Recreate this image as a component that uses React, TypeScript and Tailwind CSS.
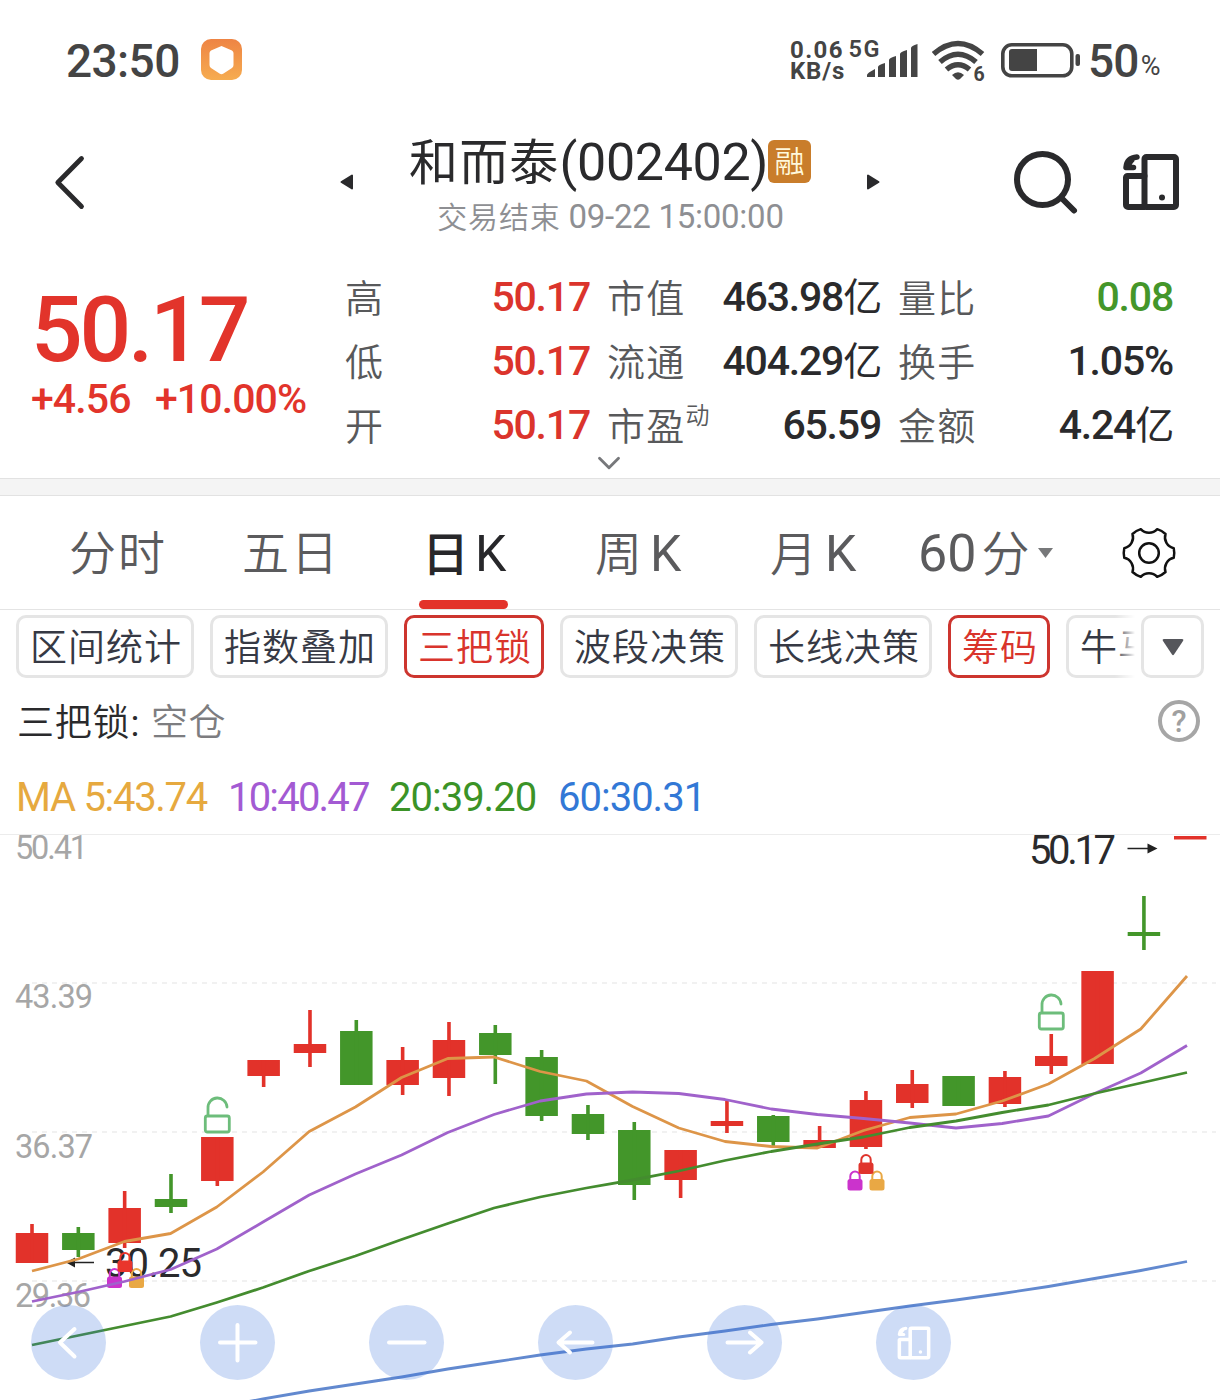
import { ChevronDown } from 'lucide-react';
import clsx from 'clsx';

type Side = 'up' | 'down';

// high, body top, body bottom, low (chart y coordinates)
const CANDLES: [Side, number, number, number, number][] = [
  ['up', 1224, 1233, 1263, 1263],
  ['down', 1227, 1233, 1250, 1257],
  ['up', 1191, 1208, 1243, 1248],
  ['down', 1174, 1199, 1207, 1213],
  ['up', 1137, 1137, 1181, 1186],
  ['up', 1060, 1060, 1076, 1087],
  ['up', 1010, 1044, 1053, 1067],
  ['down', 1020, 1031, 1085, 1085],
  ['up', 1047, 1060, 1085, 1095],
  ['up', 1022, 1040, 1078, 1096],
  ['down', 1025, 1033, 1055, 1084],
  ['down', 1050, 1057, 1116, 1121],
  ['down', 1105, 1114, 1134, 1140],
  ['down', 1122, 1130, 1185, 1200],
  ['up', 1150, 1150, 1180, 1198],
  ['up', 1100, 1121, 1126, 1133],
  ['down', 1115, 1116, 1142, 1148],
  ['up', 1126, 1140, 1148, 1148],
  ['up', 1091, 1100, 1147, 1149],
  ['up', 1070, 1084, 1103, 1108],
  ['down', 1076, 1076, 1106, 1106],
  ['up', 1071, 1077, 1104, 1107],
  ['up', 1034, 1056, 1066, 1074],
  ['up', 971, 971, 1064, 1064],
  ['down', 896, 932, 936, 950],
  ['up', 836, 836, 839.5, 839],
];

const LINES = [
  { color: '#6289cf', start: 4, ys: [1407, 1399, 1391, 1384, 1377, 1369, 1362, 1355, 1349, 1344, 1337, 1331, 1324.5, 1319, 1312.5, 1306, 1300, 1293.5, 1286.5, 1278.5, 1270.5, 1261.5] },
  { color: '#dd9548', start: 0, ys: [1271, 1259, 1241.5, 1233.5, 1207, 1172, 1131.5, 1107, 1077.5, 1058.5, 1057, 1071.5, 1081, 1106.5, 1128, 1141.5, 1146.5, 1148, 1130.5, 1117.5, 1114, 1101, 1084, 1058.5, 1029, 976] },
  { color: '#a062cb', start: 0, ys: [1301.5, 1292, 1281.5, 1269.5, 1249, 1222, 1195, 1174, 1155, 1132.5, 1114.5, 1101, 1094, 1092, 1093.5, 1099.5, 1109, 1114.5, 1118.5, 1123, 1128, 1123.5, 1116, 1093.5, 1073, 1045.5] },
  { color: '#448c2f', start: 0, ys: [1345, 1335.5, 1326, 1316.5, 1302.5, 1287.5, 1271, 1256, 1239.5, 1223.5, 1208, 1197, 1188, 1180, 1171, 1160.5, 1151.5, 1144, 1137, 1127.5, 1121, 1112.5, 1105, 1093.5, 1083, 1072.5] },
];

const QUOTES = [
  [{ label: '高', value: '50.17', tone: 'text-[#db342c]' }, { label: '市值', value: '463.98', unit: '亿' }, { label: '量比', value: '0.08', tone: 'text-[#44962a]' }],
  [{ label: '低', value: '50.17', tone: 'text-[#db342c]' }, { label: '流通', value: '404.29', unit: '亿' }, { label: '换手', value: '1.05%' }],
  [{ label: '开', value: '50.17', tone: 'text-[#db342c]' }, { label: '市盈', sup: '动', value: '65.59' }, { label: '金额', value: '4.24', unit: '亿' }],
] as { label: string; value: string; unit?: string; sup?: string; tone?: string }[][];

const CHIPS = [
  { label: '区间统计' },
  { label: '指数叠加' },
  { label: '三把锁', active: true },
  { label: '波段决策' },
  { label: '长线决策' },
  { label: '筹码', active: true },
  { label: '牛马熊' },
];

function RotateIcon({ className }: { className: string }) {
  return (
    <svg className={className} viewBox="0 0 58 58" fill="none" stroke="currentColor" strokeWidth="6" strokeLinejoin="round" strokeLinecap="round">
      <rect x="22.5" y="4" width="31.5" height="50" rx="2" />
      <path d="M22.5 23H5.5a1.5 1.5 0 0 0-1.5 1.5V52a2 2 0 0 0 2 2H22.5" />
      <path d="M15 4C8 4.500 4.500 8.500 4 14.500H11.500" strokeWidth="5.5" />
      <path d="M5 14.500C8 13 8 9 10.500 7.500" strokeWidth="4" />
      <circle cx="40" cy="44.500" r="3" fill="currentColor" stroke="none" />
    </svg>
  );
}

function GearIcon() {
  const at = (r: number, deg: number) => {
    const a = (deg * Math.PI) / 180;
    return `${(28 + r * Math.cos(a)).toFixed(2)} ${(28 + r * Math.sin(a)).toFixed(2)}`;
  };
  // six soft teeth joined by concave arcs
  let d = `M${at(25.2, -11)}`;
  for (let i = 0; i < 6; i++) {
    const t = i * 60;
    d += `Q${at(25.8, t)} ${at(25.2, t + 11)}A11 11 0 0 0 ${at(25.2, t + 49)}`;
  }
  return (
    <svg className="size-14" viewBox="0 0 56 56" fill="none" stroke="#111" strokeWidth="2.5" strokeLinejoin="round">
      <path d={d + 'Z'} />
      <circle cx="28" cy="28" r="9.8" />
    </svg>
  );
}

function StatusBar() {
  return (
    <div className="flex h-[110px] items-start pt-[37px] pl-[66px] text-[#444]">
      <span className="w-[135px] text-[46px] leading-[49px] font-medium tracking-[-0.6px]">23:50</span>
      <svg className="mt-[2px] size-[41px]" viewBox="0 0 41 41">
        <defs>
          <linearGradient id="shield" x1="0" y1="0" x2="0" y2="1">
            <stop offset="0" stopColor="#ee8444" />
            <stop offset="1" stopColor="#f6ac50" />
          </linearGradient>
        </defs>
        <rect width="41" height="41" rx="10" fill="url(#shield)" />
        <path d="M20.5 7 31 11.500Q32.500 12.500 32.500 14V26Q32.500 28 31 29L22.500 34.500Q20.500 36 18.500 34.500L10 29Q8.500 28 8.500 26V14Q8.500 12.500 10 11.500Z" fill="#fff" />
      </svg>
      <div className="ml-[548px] w-[58px] pt-[3px] text-[24px] leading-[21px] font-bold">
        <div className="tracking-[1.4px]">0.06</div>
        <div className="tracking-[0.8px]">KB/s</div>
      </div>
      <svg className="h-[44px] w-[70px] overflow-visible" viewBox="848 37 70 44" fill="#444">
        <text x="848.5" y="57" fontSize="23.5" fontWeight="600" letterSpacing="1.5">5G</text>
        <path d="M867 77v-2q0-2 8-6v8zM878 77V67q0-2 7-4v14zM889 77V60q0-2 7-4v21zM900 77V54q0-2 7-4v27zM911 77V48q0-2 6.500-4v33z" />
      </svg>
      <svg className="ml-[14px] h-[48px] w-[54px]" viewBox="932 37 54 48" fill="none" stroke="#444" strokeWidth="5.5">
        <path d="M933.500 54Q958 33 982.500 54" />
        <path d="M940 62Q958 46.500 976 62" />
        <path d="M946.500 69.500Q958 60 969.500 69.500" />
        <path d="M952 75Q958 69.500 964 75L960 79Q958 80.500 956 79Z" fill="#444" stroke="none" />
        <text x="973.5" y="81" fontSize="19.5" fontWeight="700" fill="#444" stroke="none">6</text>
      </svg>
      <svg className="ml-[14px] h-[46px] w-[82px]" viewBox="1000 37 82 46">
        <rect x="1002.8" y="44.8" width="69" height="31" rx="9" fill="none" stroke="#444" strokeWidth="3.6" />
        <path d="M1012 49h25v22h-25q-3 0-3-3V52q0-3 3-3z" fill="#444" />
        <rect x="1075.5" y="54" width="4.5" height="12" rx="2" fill="#444" />
      </svg>
      <span className="ml-[6px] text-[46px] leading-[49px] font-medium tracking-[-0.8px]">50</span>
      <span className="ml-[2px] text-[27px] leading-[58px]">%</span>
    </div>
  );
}

function Header() {
  return (
    <div className="flex h-[158px] text-[#2a2a2c]">
      <svg className="mt-[44px] ml-[54px] h-[56px] w-[32px]" viewBox="54 154 32 56" fill="none" stroke="currentColor" strokeWidth="4.8" strokeLinecap="round" strokeLinejoin="round">
        <path d="M81.500 158.500 57.800 182.500 81.500 206.500" />
      </svg>
      <svg className="mt-[64px] ml-[254px] h-4 w-[13px]" viewBox="0 0 13 16" fill="currentColor" stroke="currentColor" strokeWidth="2" strokeLinejoin="round">
        <path d="M12 1.500V14.500L1.500 8Z" />
      </svg>
      <div className="w-[514px] pt-[25px]">
        <div className="flex h-[56px] items-center justify-center">
          <span className="text-[52px] leading-[56px] tracking-[-0.35px]">
            <span className="text-[49px] tracking-[1.2px]">和而泰</span>(002402)
          </span>
          <span className="mt-[-4px] flex size-[43px] items-center justify-center rounded-md bg-[#c97d2b] pt-[2px] text-[30px] leading-none font-[350] text-[#fff8dc]">融</span>
        </div>
        <div className="mt-[6px] pl-px text-center text-[33px] leading-[40px] tracking-[-0.25px] text-[#8e8f93]">
          <span className="text-[30px] font-[350] tracking-[0.8px]">交易结束</span> 09-22 15:00:00
        </div>
      </div>
      <svg className="mt-[64px] h-4 w-[13px]" viewBox="0 0 13 16" fill="currentColor" stroke="currentColor" strokeWidth="2" strokeLinejoin="round">
        <path d="M1 1.500V14.500L11.500 8Z" />
      </svg>
      <svg className="mt-[40px] ml-[133px] size-[66px]" viewBox="1013 150 66 66" fill="none" stroke="currentColor" strokeWidth="6" strokeLinecap="round">
        <circle cx="1042.5" cy="179.5" r="25.5" />
        <path d="M1061.500 198 1074 210.500" />
      </svg>
      <RotateIcon className="mt-[43px] ml-[43px] size-[58px]" />
    </div>
  );
}

function Quote() {
  return (
    <div className="relative flex h-[210px]">
      <div className="w-[345px] text-[#e2342b]">
        <div className="mt-[16px] ml-[31px] text-[91px] leading-[92px] font-medium tracking-[-3.2px]">50.17</div>
        <div className="mt-[-2px] ml-[31px] flex text-[41px] leading-[50px] font-medium tracking-[-0.9px]">
          <span className="w-[124px]">+4.56</span>
          <span>+10.00%</span>
        </div>
      </div>
      <div className="flex flex-col">
        {QUOTES.map((row, i) => (
          <div key={i} className="grid h-[64px] grid-cols-[245px_274px_275px] gap-x-[17px]">
            {row.map((q) => (
              <div key={q.label} className="flex justify-between">
                <span className="text-[38px] leading-[62px] font-[350] tracking-[1.2px] text-[#58595b]">
                  {q.label}
                  {q.sup && <sup className="top-[-16px] text-[24px] leading-none">{q.sup}</sup>}
                </span>
                <span className={clsx('text-[41px] leading-[58px] font-medium tracking-[-1.2px]', q.tone ?? 'text-[#2a2a2c]')}>
                  {q.value}
                  {q.unit && <span className="text-[39px] font-normal">{q.unit}</span>}
                </span>
              </div>
            ))}
          </div>
        ))}
      </div>
      <ChevronDown className="absolute top-[176px] left-[590px] size-[38px] text-[#77787b]" strokeWidth={1.8} />
    </div>
  );
}

function Tabs() {
  return (
    <div className="relative flex h-[114px] border-b border-[#e4e4e4] text-[47px] leading-[116px] text-[#5b5b5d]">
      <span className="ml-[69px] w-[173px] font-[350] tracking-[2px]">分时</span>
      <span className="w-[180px] font-[350] tracking-[2px]">五日</span>
      <span className="w-[173px] font-medium text-[#27272a]">日<span className="ml-[6px] text-[50px] font-normal">K</span></span>
      <span className="w-[175px] font-[350]">周<span className="ml-[8px] text-[50px] font-normal">K</span></span>
      <span className="w-[148px] font-[350]">月<span className="ml-[8px] text-[50px] font-normal">K</span></span>
      <span className="w-[120px] whitespace-nowrap">
        <span className="text-[52px]">60</span>
        <span className="ml-[5px] text-[48px] font-[350]">分</span>
      </span>
      <svg className="mt-[52px] h-[10px] w-[15px]" viewBox="0 0 15 10" fill="#77787a">
        <path d="M0 0H15L7.500 10Z" />
      </svg>
      <span className="mt-[29px] ml-[68px]">
        <GearIcon />
      </span>
      <div className="absolute bottom-0 left-[419px] h-[9px] w-[89px] rounded-full bg-[#e3322a]" />
    </div>
  );
}

function Indicators() {
  return (
    <div className="relative mt-[5px] flex h-[63px] gap-4 overflow-hidden pl-4">
      {CHIPS.map((c) => (
        <span
          key={c.label}
          className={clsx(
            'h-[63px] shrink-0 rounded-[10px] border-3 pr-[9px] pl-[11px] text-[37px] leading-[61px] font-[350] tracking-[1px]',
            c.active ? 'border-[#cd352f] text-[#d9342c]' : 'border-[#e5e5e5] text-[#363944]'
          )}
        >
          {c.label}
        </span>
      ))}
      {/* fade the overflowing chip behind the menu button */}
      <div className="absolute top-0 right-0 flex h-full bg-white pr-4">
        <div className="absolute right-full h-full w-5 bg-linear-to-r from-white/0 to-white" />
        <div className="ml-[6px] flex h-full w-[63px] items-center justify-center rounded-[10px] border-3 border-[#e5e5e5]">
          <svg className="h-[18px] w-[22px]" viewBox="0 0 22 18" fill="#55565b">
            <path d="M2 1H20Q22 1 21 3L12 16.500Q11 18 10 16.500L1 3Q0 1 2 1Z" />
          </svg>
        </div>
      </div>
    </div>
  );
}

function Lock({ x, y, color }: { x: number; y: number; color: string }) {
  return (
    <g transform={`translate(${x} ${y})`}>
      <path d="M2.800 10V5.800a4.700 4.700 0 0 1 9.400 0v4.200" fill="none" stroke={color} strokeWidth="2" />
      <rect y="8.5" width="15" height="11.5" rx="2.5" fill={color} />
    </g>
  );
}

function OpenLock({ x, y }: { x: number; y: number }) {
  return (
    <g transform={`translate(${x} ${y})`} fill="none" stroke="#6dbd7b" strokeWidth="2.8" strokeLinecap="round">
      <rect x="1.3" y="18.5" width="24" height="16" rx="2" />
      <path d="M4 18V10.500a9.500 9.500 0 0 1 19-1" />
    </g>
  );
}

function Chart() {
  return (
    <svg className="block h-[566px] w-[1220px] overflow-visible" viewBox="0 834 1220 566">
      <path d="M0 834.500H1220" stroke="#ececec" />
      {[983, 1132, 1281].map((y) => (
        <path key={y} d={`M32 ${y}H1216`} stroke="#ededed" strokeWidth="1.5" strokeDasharray="5 5" />
      ))}
      <g fontSize="32.5" fill="#a6a6a6">
        <text x="15" y="859" textLength="73">50.41</text>
        <text x="15" y="1008" textLength="78">43.39</text>
        <text x="15" y="1158" textLength="78">36.37</text>
        <text x="15" y="1307" textLength="76">29.36</text>
      </g>
      <g fontSize="40" fill="#2a2a2c">
        <text x="1029" y="864" textLength="87">50.17</text>
        <text x="105" y="1277" textLength="97">30.25</text>
      </g>
      <path d="M1127.500 848.500H1148M74 1262.500H94" stroke="#222" strokeWidth="1.3" />
      <path d="M1147.500 843.500V853.500L1157.500 848.500ZM75 1257.500V1267.500L66 1262.500Z" fill="#222" />
      {CANDLES.map(([side, high, top, bottom, low], i) => {
        const x = 32 + i * 46.33;
        return (
          <g key={i} fill={side === 'up' ? '#e2322a' : '#43962a'}>
            <rect x={x - 16.25} y={top} width="32.5" height={bottom - top} />
            <rect x={x - 1.8} y={high} width="3.6" height={low - high} />
          </g>
        );
      })}
      <Lock x={107} y={1268} color="#cb33cc" />
      <Lock x={129} y={1268} color="#e9a844" />
      <Lock x={117.5} y={1252} color="#e9352c" />
      <Lock x={847.5} y={1170.5} color="#cb33cc" />
      <Lock x={869.5} y={1170.5} color="#e9a844" />
      <Lock x={858.5} y={1154} color="#e0342c" />
      <OpenLock x={204} y={1097.5} />
      <OpenLock x={1038} y={994.5} />
      {LINES.map((l) => (
        <polyline
          key={l.color}
          points={l.ys.map((y, i) => `${32 + (i + l.start) * 46.2},${y}`).join(' ')}
          fill="none"
          stroke={l.color}
          strokeWidth="2.8"
          strokeLinejoin="round"
        />
      ))}
    </svg>
  );
}

const TOOLS = [
  'M43.5 24 29 37.5 43.5 51.5',
  'M20 37.5H55.5M37.5 20V55.5',
  'M20 37.5H55.5',
  'M20.5 37.5H54.5M32 27.5 20.5 37.5 32 47.5',
  'M20.5 37.5H54.5M43 27.5 54.5 37.5 43 47.5',
];

export default function App() {
  return (
    <div className="h-[1400px] w-[1220px] overflow-hidden bg-white font-[Roboto,'Noto_Sans_CJK_SC',sans-serif]">
      <StatusBar />
      <Header />
      <Quote />
      <div className="h-[18px] border-y border-[#e2e2e2] bg-[#f4f4f4]" />
      <Tabs />
      <Indicators />

      <div className="flex h-[86px] items-center pr-[20px] pl-[17px] text-[37px] text-[#2a2a2c]">
        <span className="w-[134px] pt-[5px] font-[350] tracking-[0.8px]">三把锁<span className="font-normal">:</span></span>
        <span className="pt-[5px] font-[350] tracking-[0.5px] text-[#7d7d80]">空仓</span>
        <span className="ml-auto flex size-[42px] items-center justify-center rounded-full border-4 border-[#a6a6a6] text-[31px] leading-none font-medium text-[#a0a0a0]">?</span>
      </div>

      <div className="flex h-[70px] pl-[16px] text-[40px] leading-[68px] whitespace-nowrap">
        <span className="w-[212px] tracking-[-1.3px] text-[#e6a93f]">MA 5:43.74</span>
        <span className="w-[161px] tracking-[-1.8px] text-[#a35ad3]">10:40.47</span>
        <span className="w-[169px] tracking-[-1px] text-[#3b9327]">20:39.20</span>
        <span className="tracking-[-1px] text-[#3278d6]">60:30.31</span>
      </div>

      <div className="relative">
        <Chart />
        <div className="absolute bottom-[20px] left-[31px] flex gap-[94px] text-white">
          {TOOLS.map((d) => (
            <button key={d} className="size-[75px] rounded-full bg-[#3c74db]/25">
              <svg viewBox="0 0 75 75" fill="none" stroke="currentColor" strokeWidth="4" strokeLinecap="round" strokeLinejoin="round">
                <path d={d} />
              </svg>
            </button>
          ))}
          <button className="flex size-[75px] items-center justify-center rounded-full bg-[#3c74db]/25">
            <RotateIcon className="size-[34px]" />
          </button>
        </div>
      </div>
    </div>
  );
}
